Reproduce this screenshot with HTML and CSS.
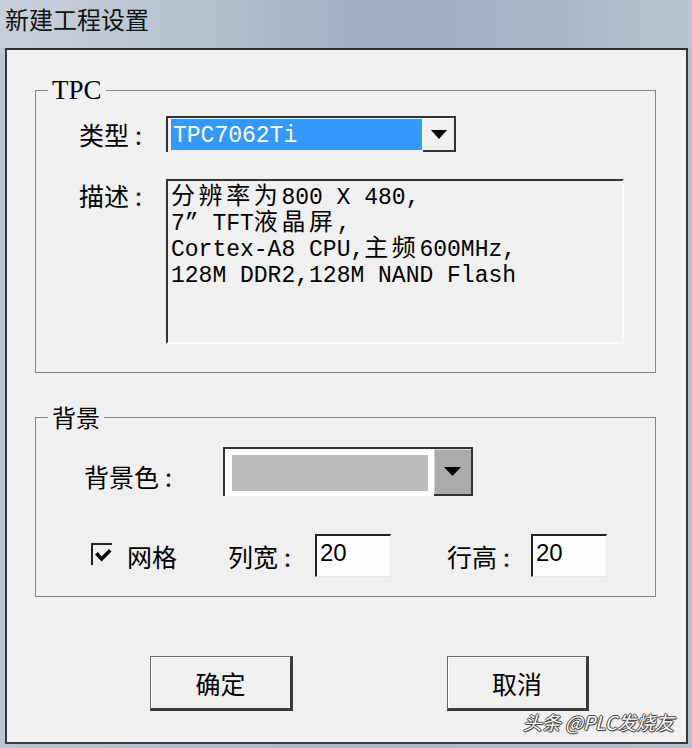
FILE: index.html
```html
<!DOCTYPE html>
<html lang="zh-CN">
<head>
<meta charset="utf-8">
<title>新建工程设置</title>
<link rel="stylesheet" href="styles.css">
</head>
<body>
<div class="window">
  <div class="titlebar">新建工程设置</div>
  <div class="panel">
    <fieldset class="group group-tpc">
      <legend class="legend legend-latin">TPC</legend>
      <div class="tpc-grid">
        <span class="label">类型<span class="colon">:</span></span>
        <div class="combo-type">
          <div class="combo-value">TPC7062Ti</div>
          <div class="combo-btn">
            <svg width="16" height="9" viewBox="0 0 16 9"><polygon points="0,0 16,0 8,9" fill="#000"/></svg>
          </div>
        </div>
        <span class="label label-top">描述<span class="colon">:</span></span>
        <div class="desc">
          <div class="desc-line"><span class="cj">分辨率为</span>800 X 480,</div>
          <div class="desc-line">7” TFT<span class="cj">液晶屏</span>,</div>
          <div class="desc-line">Cortex-A8 CPU,<span class="cj">主频</span>600MHz,</div>
          <div class="desc-line">128M DDR2,128M NAND Flash</div>
        </div>
      </div>
    </fieldset>
    <fieldset class="group group-bg">
      <legend class="legend">背景</legend>
      <div class="bg-row">
        <span class="label label-bgcolor">背景色<span class="colon">:</span></span>
        <div class="combo-color">
          <div class="color-value"></div>
          <div class="combo-btn-gray">
            <svg width="17" height="9" viewBox="0 0 17 9"><polygon points="0,0 17,0 8.5,9" fill="#000"/></svg>
          </div>
        </div>
      </div>
      <div class="grid-row">
        <span class="checkbox">
          <svg width="17" height="15" viewBox="0 0 17 15"><polygon points="0,6.5 3,4 6.5,8.5 14,1 16.5,3.5 6.5,13.5" fill="#000"/></svg>
        </span>
        <span class="label label-grid">网格</span>
        <span class="label label-colw">列宽<span class="colon">:</span></span>
        <div class="num">20</div>
        <span class="label label-rowh">行高<span class="colon">:</span></span>
        <div class="num">20</div>
      </div>
    </fieldset>
    <div class="buttons">
      <div class="btn btn-ok">确定</div>
      <div class="btn btn-cancel">取消</div>
    </div>
    <div class="watermark">头条 @PLC发烧友</div>
  </div>
</div>
</body>
</html>
```
FILE: styles.css
```css
html, body {
  margin: 0;
  padding: 0;
}
body {
  width: 692px;
  height: 748px;
  overflow: hidden;
  font-family: "Noto Sans CJK SC", "Noto Sans", sans-serif;
  color: #000;
}
.window {
  width: 692px;
  height: 748px;
  box-sizing: border-box;
  display: flex;
  flex-direction: column;
  padding: 0 4px 4px 5px;
  background: linear-gradient(90deg, #b9c5d2 0%, #a9b9ca 50%, #b4c1cf 100%);
}
.titlebar {
  height: 48px;
  flex: none;
  margin: 0 -4px 0 -5px;
  padding-left: 5px;
  font-size: 24px;
  line-height: 38px;
  color: #111;
  background: linear-gradient(90deg, #c7d0da 0%, #b6c2cf 28%, #9aadc1 55%, #a6b6c7 78%, #b9c5d1 100%);
}
.panel {
  flex: 1;
  position: relative;
  background: #f0f0f0;
  border: 2px solid #3a3a3a;
  border-top-color: #2e2e2e;
  display: flex;
  flex-direction: column;
}
.group {
  margin: 0 30px 0 28px;
  padding: 0;
  border: 1px solid #858585;
  min-width: 0;
}
.group-tpc {
  margin-top: 27px;
}
.group-bg {
  margin-top: 31px;
}
.legend {
  margin-left: 12px;
  padding: 0 4px;
  font-size: 24px;
  line-height: 26px;
}
.legend-latin {
  font-family: "Liberation Serif", serif;
  font-size: 27px;
}
.label {
  font-size: 25px;
  line-height: 30px;
  white-space: nowrap;
}
.colon {
  margin-left: 6px;
}
.tpc-grid {
  display: grid;
  grid-template-columns: 87px auto;
  row-gap: 27px;
  align-items: center;
  padding: 13px 0 28px 43px;
}
.label-top {
  align-self: start;
  margin-top: 1px;
}
.combo-type {
  width: 290px;
  height: 36px;
  box-sizing: border-box;
  border-top: 2px solid #333;
  border-left: 2px solid #333;
  padding: 1px 0 0 3px;
  display: flex;
  align-items: flex-start;
}
.combo-value {
  width: 249px;
  height: 31px;
  padding-left: 2px;
  background: #3399ff;
  color: #fff;
  font-family: "Liberation Mono", monospace;
  font-size: 23px;
  line-height: 35px;
  overflow: hidden;
}
.combo-btn {
  width: 33px;
  height: 34px;
  margin-top: -1px;
  margin-left: 1px;
  box-sizing: border-box;
  background: #f0f0f0;
  border-right: 2px solid #333;
  border-bottom: 2px solid #333;
  box-shadow: inset 1px 1px 0 #fff;
  display: flex;
  align-items: center;
  justify-content: center;
}
.desc {
  width: 458px;
  height: 165px;
  box-sizing: border-box;
  border-top: 2px solid #333;
  border-left: 2px solid #333;
  border-right: 2px solid #fafafa;
  border-bottom: 2px solid #fafafa;
  background: #f0f0f0;
  padding: 4px 0 0 3px;
  font-family: "Liberation Mono", "Noto Sans CJK SC", monospace;
  font-size: 23px;
  line-height: 26px;
}
.desc-line {
  height: 26px;
  white-space: pre;
}
.cj {
  font-family: "Noto Sans CJK SC", sans-serif;
  font-size: 24px;
  line-height: 16px;
  letter-spacing: 3.6px;
}
.bg-row {
  display: flex;
  align-items: center;
  padding: 17px 0 0 48px;
}
.label-bgcolor {
  width: 139px;
  margin-top: 8px;
}
.combo-color {
  width: 250px;
  height: 49px;
  box-sizing: border-box;
  border-top: 2px solid #333;
  border-left: 2px solid #333;
  background: #fff;
  display: flex;
  align-items: flex-start;
}
.color-value {
  width: 196px;
  height: 36px;
  margin: 6px 0 0 7px;
  background: #bdbdbd;
}
.combo-btn-gray {
  width: 39px;
  height: 47px;
  margin-left: 6px;
  box-sizing: border-box;
  background: #aaaaaa;
  border-right: 2px solid #333;
  border-bottom: 2px solid #333;
  box-shadow: inset 1px 1px 0 #d4d4d4;
  display: flex;
  align-items: center;
  justify-content: center;
}
.grid-row {
  display: flex;
  align-items: center;
  height: 43px;
  padding: 38px 0 19px 55px;
}
.checkbox {
  width: 21px;
  height: 22px;
  box-sizing: border-box;
  border-top: 2px solid #222;
  border-left: 2px solid #222;
  display: flex;
  align-items: flex-end;
  justify-content: flex-end;
  padding-bottom: 2px;
  margin-top: -4px;
}
.label-grid {
  margin-left: 15px;
  width: 50px;
}
.label-colw {
  margin-left: 51px;
  width: 87px;
}
.label-rowh {
  margin-left: 56px;
  width: 84px;
}
.num {
  width: 76px;
  height: 43px;
  box-sizing: border-box;
  border-top: 2px solid #222;
  border-left: 2px solid #222;
  border-right: 1px solid #e6e6e6;
  border-bottom: 1px solid #e6e6e6;
  background: #fcfcfc;
  padding-left: 3px;
  font-family: "Liberation Sans", sans-serif;
  font-size: 24px;
  line-height: 34px;
}
.buttons {
  display: flex;
  margin: 59px 0 0 143px;
  gap: 154px;
}
.btn {
  height: 55px;
  box-sizing: border-box;
  background: #f0f0f0;
  border: 1px solid #6a6a6a;
  border-right: 3px solid #3a3a3a;
  border-bottom: 3px solid #3a3a3a;
  box-shadow: inset 1px 1px 0 #fff;
  display: flex;
  align-items: center;
  justify-content: center;
  font-size: 25px;
  line-height: 30px;
}
.btn-ok {
  width: 143px;
}
.btn-cancel {
  width: 142px;
}
.watermark {
  position: absolute;
  right: 12px;
  bottom: 7px;
  font-size: 19px;
  font-style: italic;
  color: #fff;
  text-shadow: 1px 0 0 #444, -1px 0 0 #444, 0 1px 0 #444, 0 -1px 0 #444, 1px 1px 1px #666;
  white-space: nowrap;
}
```
